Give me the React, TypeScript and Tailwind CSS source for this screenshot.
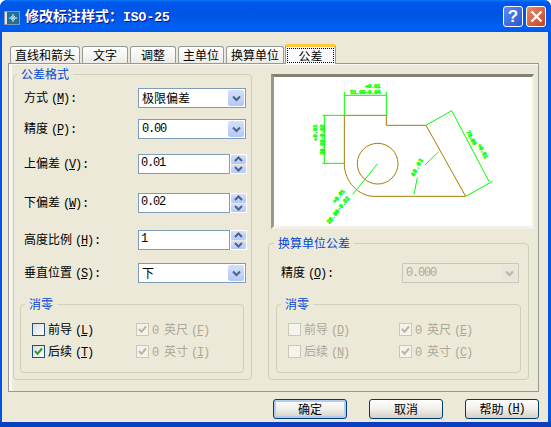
import React from "react";

const MONO = "font-['Liberation_Mono',monospace] tracking-[-1.2px]";
const mono = (s: string) => <span className={MONO}>{s}</span>;

function Mn({ k }: { k: string }) {
  return (
    <span className={`${MONO} ml-[3px]`}>
      (<span className="underline">{k}</span>)
    </span>
  );
}

function Label({ cn, k }: { cn: string; k: string }) {
  return (
    <span className="w-[114px] shrink-0 text-black whitespace-nowrap">
      {cn}
      <Mn k={k} />
      <span className={`${MONO} ml-px`}>:</span>
    </span>
  );
}

function Chevron({ color }: { color: string }) {
  return (
    <svg width="9" height="7" viewBox="0 0 9 7">
      <path d="M1 1.5 L4.5 5 L8 1.5" fill="none" stroke={color} strokeWidth="2" />
    </svg>
  );
}

function Select({ value, disabled, mono: isMono }: { value: string; disabled?: boolean; mono?: boolean }) {
  return (
    <div
      className={`flex items-center h-[20px] border pl-[3px] pr-px ${
        disabled ? "w-[117px] border-[#c9c7ba] bg-[#ece9d8] text-[#aca899]" : "w-[108px] border-[#7f9db9] bg-white text-black"
      }`}
    >
      <span className={`flex-1 ${isMono ? MONO : ""}`}>{value}</span>
      <span
        className={`flex items-center justify-center w-[16px] h-[16px] rounded-[2px] ${
          disabled ? "bg-[#e8e6da]" : "bg-gradient-to-b from-[#d4e0fb] to-[#b4c8f6]"
        }`}
      >
        <Chevron color={disabled ? "#b8b6a8" : "#4d6185"} />
      </span>
    </div>
  );
}

function SpinBtn({ up }: { up?: boolean }) {
  return (
    <span className="flex-1 flex items-center justify-center rounded-[2px] bg-gradient-to-b from-[#d4e0fb] to-[#b4c8f6]">
      <svg width="9" height="6" viewBox="0 0 9 6" className={up ? "rotate-180" : ""}>
        <path d="M1 1 L4.5 4.5 L8 1" fill="none" stroke="#4d6185" strokeWidth="2" />
      </svg>
    </span>
  );
}

function Spin({ value }: { value: string }) {
  return (
    <div className="flex h-[20px]">
      <div className={`w-[92px] h-[20px] border border-[#7f9db9] bg-white pl-[2px] leading-[17px] text-black ${MONO}`}>{value}</div>
      <div className="w-[17px] h-[20px] flex flex-col gap-px border border-white">
        <SpinBtn up />
        <SpinBtn />
      </div>
    </div>
  );
}

function Check({ checked, disabled, children }: { checked?: boolean; disabled?: boolean; children: React.ReactNode }) {
  return (
    <div className={`flex items-center h-[13px] ${disabled ? "text-[#aca899]" : "text-black"}`}>
      <span
        className={`w-[13px] h-[13px] shrink-0 border flex items-center justify-center ${
          disabled
            ? "border-[#cac8bb] bg-[#f4f3ec]"
            : "border-[#1c5180] bg-gradient-to-br from-[#dcdcd7] to-white"
        }`}
      >
        {checked && (
          <svg width="9" height="9" viewBox="0 0 9 9">
            <path d="M1 4 L3.5 6.8 L8 1.5" fill="none" stroke={disabled ? "#b8b4a4" : "#21a121"} strokeWidth="2" />
          </svg>
        )}
      </span>
      <span className="ml-[3px] whitespace-nowrap">{children}</span>
    </div>
  );
}

function Zero({ a, b, c, d, disabled, activeChecked, width }: { a: string; b: string; c: string; d: string; disabled?: boolean; activeChecked?: boolean; width: string }) {
  return (
    <fieldset className={`${width} h-[77px] border border-[#d0d0bf] rounded-[4px] pl-[11px]`}>
      <legend className="-ml-[7px] px-[4px] h-[16px] leading-[16px] text-[#0046d5]">消零</legend>
      <div className="grid grid-rows-[13px_13px] gap-y-[9px] mt-[11px]" style={{ gridTemplateColumns: disabled ? "111px 1fr" : "104px 1fr" }}>
        <Check disabled={disabled}>
          前导<Mn k={a} />
        </Check>
        <Check checked disabled>
          {mono("0")}
          <span className="ml-[6px]">英尺</span>
          <Mn k={b} />
        </Check>
        <Check disabled={disabled} checked={activeChecked}>
          后续<Mn k={c} />
        </Check>
        <Check checked disabled>
          {mono("0")}
          <span className="ml-[6px]">英寸</span>
          <Mn k={d} />
        </Check>
      </div>
    </fieldset>
  );
}

function Tab({ w, label, active }: { w: string; label: string; active?: boolean }) {
  if (active) {
    return (
      <div className={`${w} h-[20px] relative z-10 -mb-px rounded-t-[3px] border-x border-[#919b9c] border-t-[3px] border-t-[#ffc73c] bg-[#fcfcfe] p-px`}>
        <div className="h-[15px] border border-dotted border-black flex items-center justify-center leading-none text-black">{label}</div>
      </div>
    );
  }
  return (
    <div className={`${w} h-[17px] rounded-t-[3px] border-x border-t border-[#919b9c] bg-gradient-to-b from-white to-[#ecebe6] flex items-center justify-center text-black leading-none`}>
      {label}
    </div>
  );
}

function Btn({ children, def }: { children: React.ReactNode; def?: boolean }) {
  return (
    <div
      className={`w-[74px] h-[20px] rounded-[3px] border border-[#003c74] bg-gradient-to-b from-white via-[#f0efe9] to-[#d6d0c5] flex items-center justify-center text-black leading-none ${
        def ? "shadow-[inset_0_0_0_2px_#b4ccf2]" : ""
      }`}
    >
      {children}
    </div>
  );
}

function Preview() {
  const G = "#00ff00";
  return (
    <div className="ml-[3px] w-[263px] h-[155px] bg-white border-t-[3px] border-l-[3px] border-r-[2px] border-b-[3px] border-t-[#85816f] border-l-[#9c9888] border-r-[#f4f2e8] border-b-[#f4f2e8] overflow-hidden">
      <svg width="230" height="160" viewBox="0 0 690 480" className="ml-[16px] block" style={{ marginTop: -6 }}>
        <g fill="none" stroke="#a67c00" strokeWidth="3">
          <path d="M163 133 H289 V163 H408 L527 376 H252 C205 376 163 330 163 280 Z" />
          <circle cx="263" cy="278" r="61" />
        </g>
        <g fill="none" stroke={G} strokeWidth="3">
          <path d="M163 133 V63 M289 133 V63 M163 73 H289" />
          <path d="M163 133 H97 M163 277 H97 M103 133 V277" />
          <path d="M408 163 L485 119 M527 376 L608 331 M485 119 L597 331" />
          <path d="M445 243 L405 282 M382 320 L372 370" />
          <path d="M263 278 L188 370" />
        </g>
        <g fill={G} stroke={G} strokeWidth="1.2" fontFamily="Liberation Mono, monospace" fontSize="18" fontWeight="700">
          <text x="225" y="50" textLength="47">+0.01</text>
          <text x="180" y="69" textLength="92">51.00-0.04</text>
          <text transform="translate(82 210) rotate(-90)" textLength="50">+0.01</text>
          <text transform="translate(102 252) rotate(-90)" textLength="92">38.00-0.02</text>
          <text transform="translate(528 182) rotate(62)" textLength="48">78.00</text>
          <text transform="translate(562 222) rotate(62)" textLength="48">+0.01</text>
          <text transform="translate(372 318) rotate(-62)" textLength="58">40.02</text>
          <text transform="translate(118 460) rotate(-52)" textLength="100">28.00-0.02</text>
          <text transform="translate(136 398) rotate(-52)" textLength="48">+0.01</text>
        </g>
      </svg>
    </div>
  );
}

function Row({ mt, children }: { mt: string; children: React.ReactNode }) {
  return <div className={`flex items-center h-[20px] ${mt}`}>{children}</div>;
}

export default function App() {
  return (
    <div className="w-[551px] h-[427px] flex flex-col rounded-t-[7px] bg-[#0054e3] text-[12px] font-['Noto_Sans_CJK_SC',sans-serif] overflow-hidden">
      <div className="h-[32px] shrink-0 flex items-center pl-[4px] pr-[5px] bg-[linear-gradient(to_bottom,#0b7cf5_0,#0058ee_7%,#0054e3_45%,#0060f5_85%,#0058e8_100%)]">
        <svg width="16" height="14" viewBox="0 0 16 14" className="shrink-0 mt-[4px]">
          <rect x="0" y="0" width="16" height="14" rx="1" fill="#8a98a8" />
          <rect x="3" y="1" width="12" height="12" fill="#1f6f96" />
          <rect x="1" y="1" width="2" height="12" fill="#dfe6ec" />
          <path d="M9 3 V11 M5 7 H13" stroke="#ffffff" strokeWidth="1" />
          <path d="M7 5 L11 9 M11 5 L7 9" stroke="#9fe3ff" />
        </svg>
        <span className="ml-[5px] text-white font-bold text-[14px] whitespace-nowrap [text-shadow:1px_1px_0_#0f1089]">
          修改标注样式：<span className="font-['Liberation_Mono',monospace] text-[13px]">ISO-25</span>
        </span>
        <div className="flex-1" />
        <div className="w-[20px] h-[21px] rounded-[3px] border border-white bg-gradient-to-br from-[#5e8cf0] to-[#2a55d0] flex items-center justify-center text-white font-bold text-[17px] font-['Liberation_Sans',sans-serif] leading-none">
          ?
        </div>
        <div className="ml-[3px] w-[20px] h-[21px] rounded-[3px] border border-white bg-gradient-to-br from-[#e88a68] to-[#c63e1c] flex items-center justify-center">
          <svg width="13" height="13" viewBox="0 0 13 13">
            <path d="M1.5 1.5 L11.5 11.5 M11.5 1.5 L1.5 11.5" stroke="#fff" strokeWidth="2.4" />
          </svg>
        </div>
      </div>

      <div className="ml-[2px] mr-[3px] h-[390px] shrink-0 bg-[#ece9d8] flex flex-col">
        <div className="flex items-end h-[20px] mt-[11px] ml-[8px] gap-[2px]">
          <Tab w="w-[70px]" label="直线和箭头" />
          <Tab w="w-[46px]" label="文字" />
          <Tab w="w-[46px]" label="调整" />
          <Tab w="w-[46px]" label="主单位" />
          <Tab w="w-[58px]" label="换算单位" />
          <div className="-ml-px">
            <Tab w="w-[51px]" label="公差" active />
          </div>
        </div>

        <div className="ml-[6px] w-[531px] h-[329px] border border-[#919b9c] bg-[#ece9d8] shadow-[inset_3px_1px_0_#f8f7f0] pl-[4px] pt-[2px] flex">
          <fieldset className="w-[239px] h-[314px] border border-[#d0d0bf] rounded-[4px] pl-[10px] shrink-0">
            <legend className="-ml-[7px] px-[4px] h-[16px] leading-[16px] text-[#0046d5]">公差格式</legend>
            <Row mt="mt-[6px]">
              <Label cn="方式" k="M" />
              <Select value="极限偏差" />
            </Row>
            <Row mt="mt-[11px]">
              <Label cn="精度" k="P" />
              <Select value="0.00" mono />
            </Row>
            <Row mt="mt-[15px]">
              <Label cn="上偏差" k="V" />
              <Spin value="0.01" />
            </Row>
            <Row mt="mt-[19px]">
              <Label cn="下偏差" k="W" />
              <Spin value="0.02" />
            </Row>
            <Row mt="mt-[17px]">
              <Label cn="高度比例" k="H" />
              <Spin value="1" />
            </Row>
            <Row mt="mt-[13px]">
              <Label cn="垂直位置" k="S" />
              <Select value="下" />
            </Row>
            <div className="-ml-[4px] mt-[13px]">
              <Zero width="w-[224px]" a="L" b="F" c="T" d="I" activeChecked />
            </div>
          </fieldset>

          <div className="ml-[16px] w-[266px] mt-[8px] flex flex-col">
            <Preview />
            <fieldset className="mt-[6px] w-[261px] h-[145px] border border-[#d0d0bf] rounded-[4px] pl-[12px]">
              <legend className="-ml-[7px] px-[4px] h-[16px] leading-[16px] text-[#0046d5]">换算单位公差</legend>
              <Row mt="mt-[12px]">
                <span className="w-[121px] shrink-0 text-black whitespace-nowrap">
                  精度
                  <Mn k="O" />
                  <span className={`${MONO} ml-px`}>:</span>
                </span>
                <Select value="0.000" disabled mono />
              </Row>
              <div className="-ml-[5px] mt-[13px]">
                <Zero width="w-[245px]" a="D" b="E" c="N" d="C" disabled />
              </div>
            </fieldset>
          </div>
        </div>

        <div className="mt-[7px] ml-[271px] flex gap-[22px]">
          <Btn def>确定</Btn>
          <Btn>取消</Btn>
          <Btn>
            帮助
            <Mn k="H" />
          </Btn>
        </div>
      </div>
      <div className="flex-1 bg-[#0a3fc0]" />
    </div>
  );
}
